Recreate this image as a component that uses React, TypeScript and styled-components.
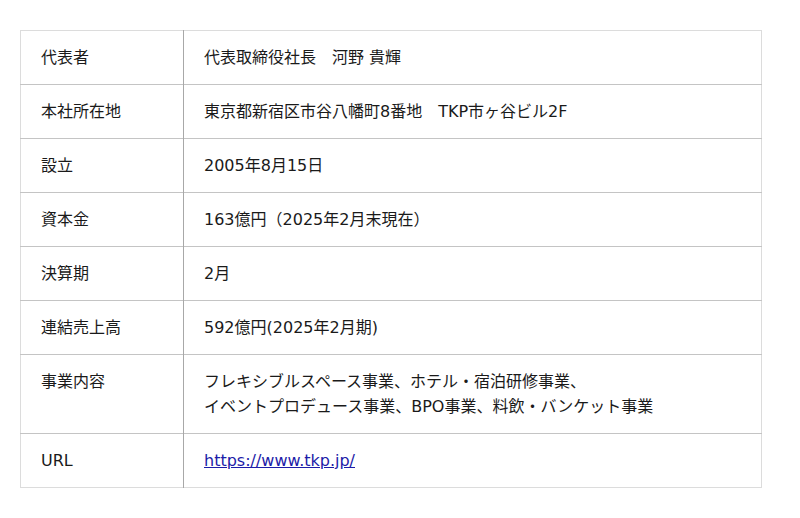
import React from 'react';
import styled, { createGlobalStyle } from 'styled-components';

const GlobalStyle = createGlobalStyle`
  body {
    margin: 0;
    background: #fff;
    font-family: "DejaVu Sans", "Noto Sans CJK JP", sans-serif;
    color: #1a1a1a;
  }
`

const Page = styled.div`
  padding: 30px 38px 30px 20px;
`

const Table = styled.table`
  width: 742px;
  border-collapse: collapse;
  border: 1px solid #dcdcdc;
  font-size: 16px;
  line-height: 25px;
`

const Row = styled.tr`
  border-bottom: 1px solid #c4c4c4;
  &:last-child {
    border-bottom: 1px solid #dcdcdc;
  }
`

const Label = styled.th`
  width: 122px;
  padding: 14px 20px;
  text-align: left;
  font-weight: normal;
  vertical-align: top;
  border-right: 1px solid #a8a8a8;
`

const Value = styled.td`
  padding: 14px 20px;
  vertical-align: top;
`

const Link = styled.a`
  color: #1c1ca8;
  text-decoration: underline;
`

type Item = {
  label: string,
  value: React.ReactNode,
};

const items: Item[] = [
  { label: '代表者', value: '代表取締役社長　河野 貴輝' },
  { label: '本社所在地', value: '東京都新宿区市谷八幡町8番地　TKP市ヶ谷ビル2F' },
  { label: '設立', value: '2005年8月15日' },
  { label: '資本金', value: '163億円（2025年2月末現在）' },
  { label: '決算期', value: '2月' },
  { label: '連結売上高', value: '592億円(2025年2月期)' },
  {
    label: '事業内容',
    value: (
      <>
        フレキシブルスペース事業、ホテル・宿泊研修事業、
        <br />
        イベントプロデュース事業、BPO事業、料飲・バンケット事業
      </>
    ),
  },
  { label: 'URL', value: <Link href="#">https://www.tkp.jp/</Link> },
];

const App = () => {
  return (
    <>
      <GlobalStyle />
      <Page>
        <Table>
          <tbody>
            {items.map((item) => (
              <Row key={item.label}>
                <Label>{item.label}</Label>
                <Value>{item.value}</Value>
              </Row>
            ))}
          </tbody>
        </Table>
      </Page>
    </>
  )
};

export default App;
